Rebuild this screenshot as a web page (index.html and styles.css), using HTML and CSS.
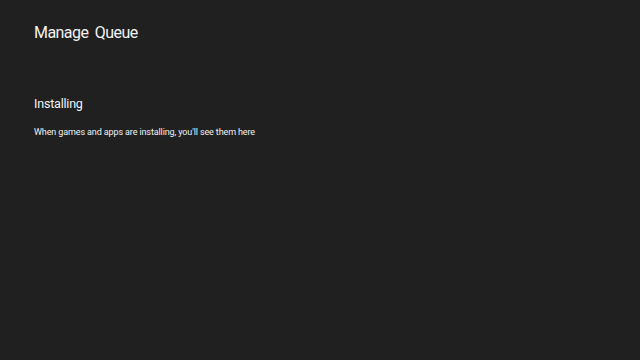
FILE: index.html
```html
<!DOCTYPE html>
<html>
<head>
  <title>Manage Queue</title>
  <meta name="viewport" content="width=device-width, initial-scale=1">
  <link rel="stylesheet" href="styles.css">
</head>
<body>
<div class="page">
  <h1 class="page__title">Manage Queue</h1>
  <section class="queue">
    <h2 class="queue__title">Installing</h2>
    <p class="queue__empty">When games and apps are installing, you'll see them here</p>
  </section>
</div>
</body>
</html>
```

FILE: styles.css
```css
html, body {
  margin: 0;
  height: 100%;
  background: #202020;
}

body {
  font-family: Roboto, "Noto Sans", sans-serif;
  color: #f2f2f2;
}

.page {
  padding: 21px 34px;
}

.page__title {
  margin: 0;
  font-size: 16px;
  font-weight: normal;
  letter-spacing: -0.55px;
  word-spacing: 3px;
  line-height: 24px;
}

.queue {
  margin-top: 50px;
}

.queue__title {
  margin: 0;
  font-size: 12.5px;
  font-weight: normal;
  letter-spacing: -0.2px;
  line-height: 18px;
}

.queue__empty {
  margin: 13px 0 0;
  font-size: 9px;
  letter-spacing: -0.12px;
  line-height: 12px;
}
```
